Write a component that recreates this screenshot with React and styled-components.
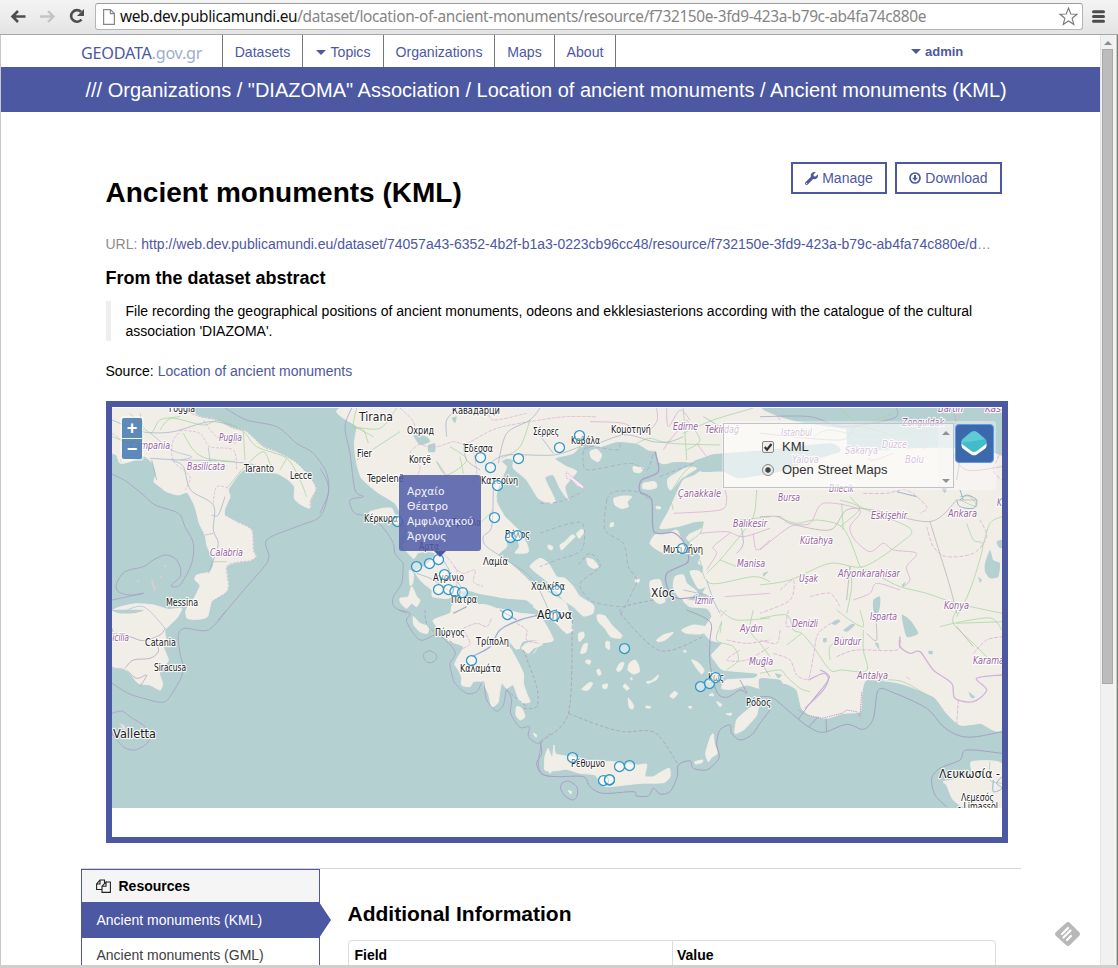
import React from "react";
import styled, { createGlobalStyle, css } from "styled-components";
import { FaWrench } from "react-icons/fa";

const blue = "#4c58a2";
const sans = '"Liberation Sans", Arial, sans-serif';

const Global = createGlobalStyle`
  * { box-sizing: border-box; }
  html, body { margin: 0; height: 968px; overflow: hidden; background: #fff; }
  body { font: 14px/20px ${sans}; color: #000; }
`;

const Browser = styled.div`
  width: 1118px; height: 968px; display: flex; flex-direction: column; overflow: hidden;
`;
const Toolbar = styled.div`
  height: 35px; flex: none; display: flex; align-items: flex-start; padding: 3px 11px 0 8px;
  background: linear-gradient(#f4f4f4, #e4e4e4); border-bottom: 1px solid #a6a6a6;
`;
const NavIcon = styled.svg`
  flex: none; width: 20px; height: 20px; margin: 3px ${p => p.$gap}px 0 0;
`;
const UrlBar = styled.div`
  width: 988px; flex: none; height: 27px; display: flex; align-items: center; padding: 0 4px 0 7px;
  background: #fff; border: 1px solid #b5b5b5; border-top-color: #9b9b9b; border-radius: 3px; margin-right: 9px;
`;
const UrlText = styled.span`
  flex: 1; margin-left: 5px; white-space: nowrap; font: 15.4px/20px "Noto Sans", sans-serif;
  letter-spacing: -0.345px; color: #858585;
  b { font-weight: 400; color: #111; }
`;
const Viewport = styled.div`
  flex: 1; display: flex; min-height: 0; border-left: 1px solid #c9c9c9;
`;
const Page = styled.main`
  width: 1099px; flex: none; overflow: hidden; background: #fff;
`;
const ScrollBar = styled.div`
  width: 14px; flex: none; background: #f1f1f1; display: flex; flex-direction: column; align-items: center;
  border-left: 1px solid #e4e4e4;
`;
const ScrollArrow = styled.i`
  width: 0; height: 0; margin: 6px 0 4px; border: 4px solid transparent; border-top-width: 0; border-bottom-color: #8c8c8c;
`;
const Thumb = styled.div`
  width: 11px; height: 635px; background: #bcbcbc; border: 1px solid #a9a9a9;
`;
const Edge = styled.div`
  width: 4px; background: linear-gradient(90deg, #f4f4f4 50%, #c8c8c8 50% 75%, #75857a 75%);
`;
const BottomEdge = styled.div`
  height: 3px; flex: none; background: #d0cfcd;
`;

const NavBar = styled.nav`
  height: 32px; display: flex; padding-left: 80px; color: ${blue};
`;
const Brand = styled.div`
  width: 141px; padding-top: 8px; white-space: nowrap; font: 16.2px/20px "Noto Sans", sans-serif; letter-spacing: -0.25px;
  span { color: #9eaed0; }
`;
const NavItem = styled.div`
  width: ${p => p.$w}px; border-left: 1px solid #777; display: flex; align-items: center; justify-content: center;
  padding-top: 2px; gap: 5px; font-size: 14.1px;
`;
const Caret = styled.i`
  border: 5px solid transparent; border-top-color: ${blue}; border-bottom: 0;
`;
const UserMenu = styled.div`
  margin-left: 295px; display: flex; align-items: center; gap: 4px; font-weight: 700; font-size: 13px; padding-top: 1px;
`;
const NavEnd = styled.div`border-left: 1px solid #777;`;
const Banner = styled.div`
  height: 45px; padding: 0 0 0 84.5px; background: ${blue}; color: #fff; font-size: 20px; line-height: 46px; white-space: nowrap;
`;
const Content = styled.section`
  padding: 50px 0 0 105px; width: 1007px;
`;
const TitleRow = styled.div`
  display: flex; justify-content: space-between; height: 71px; padding-right: 6px;
`;
const Title = styled.h1`
  margin: 15px 0 0 -0.5px; font: 700 28px/32px ${sans}; white-space: nowrap;
`;
const Actions = styled.div`display: flex; gap: 8px;`;
const Button = styled.button`
  width: ${p => p.$w}px; height: 32px; padding: 0; border: 2px solid ${blue}; background: #fff; color: ${blue};
  display: flex; align-items: center; justify-content: center; gap: 4px; font: 14px/20px ${sans};
`;
const UrlLine = styled.p`
  margin: 0 0 0 -0.5px; color: #8b8b8b; white-space: nowrap; line-height: 22px;
  a { color: ${blue}; }
`;
const Heading = styled.h3`
  margin: ${p => p.$top}px 0 0 -0.5px; font: 700 ${p => p.$size}px/24px ${sans}; white-space: nowrap;
`;
const Quote = styled.blockquote`
  margin: 11px 0 0; height: 40px; padding-left: 14.5px; border-left: 5px solid #eee; white-space: nowrap;
`;
const Source = styled.p`
  margin: 20px 0 20px -0.5px; a { color: ${blue}; }
`;
const MapFrame = styled.div`
  position: relative; width: 902px; height: 442px; border: 6px solid ${blue}; padding-top: 1px; background: #fff;
`;
const MapSvg = styled.svg`display: block; width: 890px; height: 400px;`;
const ZoomControls = styled.div`
  position: absolute; left: 8px; top: 9px; padding: 2px; display: grid; gap: 1px; background: rgba(255,255,255,.4); border-radius: 3px;
`;
const ZoomButton = styled.div`
  width: 20px; height: 20px; background: rgba(66,119,174,.85); color: #fff; font: 700 18px/20px ${sans}; text-align: center;
  border-radius: ${p => (p.$bottom ? "0 0 2px 2px" : "2px 2px 0 0")};
`;
const Popup = styled.div`
  position: absolute; left: 287px; top: 68px; width: 82px; height: 76px; padding: 9px 8px; border-radius: 3px;
  background: rgba(82,92,168,.86); color: #f4f4ff; font: 10.7px/15px "DejaVu Sans", sans-serif;
  &::after { content: ""; position: absolute; left: 35px; top: 76px; border: 6px solid transparent; border-top-color: ${blue}; border-bottom: 0; }
`;
const LayerArea = styled.div`
  position: absolute; left: 610px; top: 14px; width: 274px; height: 69px; padding: 2px 0 0 1px; background: rgba(255,255,255,.35);
  display: flex; align-items: flex-start; gap: 1px; border-radius: 3px;
`;
const LayerPanel = styled.div`
  width: 231px; height: 65px; border: 1px solid #c2c2ca; background: rgba(255,255,255,.42); display: flex; justify-content: space-between;
`;
const LayerList = styled.div`padding: 11px 0 0 38px;`;
const LayerRow = styled.label`
  display: flex; align-items: center; height: 23px; gap: 8px; font-size: 13px; color: #333; white-space: nowrap;
`;
const Check = styled.svg`width: 12px; height: 12px;`;
const MiniScroll = styled.div`
  width: 15px; display: flex; flex-direction: column; justify-content: space-between; align-items: center; padding: 7px 0 4px; background: rgba(245,245,245,.4);
  i { border: 4px solid transparent; border-top: 0; border-bottom-color: #929292; }
  i + i { transform: rotate(180deg); }
`;
const LayerButton = styled.svg`
  width: 39px; height: 39px; margin-top: 1px; background: #3c68ac; border: 1px solid #5b9cf0; border-radius: 4px;
`;

const Lower = styled.section`
  margin: 25px 0 0 80px; width: 940px; display: flex; align-items: flex-start; border-top: 1px solid #d6d6d6;
`;
const Sidebar = styled.aside`width: 239px; border: 1px solid ${blue}; border-bottom: 0;`;
const SideHead = styled.div`
  height: 32px; display: flex; align-items: center; gap: 7.5px; padding-left: 14px; background: #f5f5f5; font-weight: 700;
`;
const SideItem = styled.div`
  position: relative; height: 35px; padding-left: 14.5px; line-height: 34px; border-top: 1px solid ${blue}; color: #404040;
  ${p => p.$active && css`
    background: ${blue}; color: #fff;
    &::after { content: ""; position: absolute; left: 237px; top: -1px; border: solid transparent; border-width: 18px 0 18px 12px; border-left-color: ${blue}; }
  `}
`;
const Info = styled.div`padding: 33px 0 0 28px;`;
const Table = styled.div`
  margin-top: 14px; width: 648px; height: 60px; display: grid; grid-template-columns: 323px 1fr;
  border: 1px solid #ddd; border-radius: 4px; font-weight: 700; line-height: 29px;
`;
const Cell = styled.div`padding-left: 5.5px; & + & { border-left: 1px solid #ddd; padding-left: 4px; }`;
const FeedBadge = styled.svg`position: absolute; left: 1054px; top: 921px; width: 27px; height: 27px;`;

/* Turns a point list into a softly rounded path. */
const curve = (list, closed) => {
  const p = list.trim().split(/\s+/).map(s => s.split(",").map(Number));
  const n = p.length;
  const at = i => (closed ? p[(i + n) % n] : p[Math.max(0, Math.min(n - 1, i))]);
  const k = closed ? 0.1 : 0.15;
  let d = `M${p[0]}`;
  for (let i = 0; i < (closed ? n : n - 1); i++) {
    const [a, b, c, e] = [at(i - 1), at(i), at(i + 1), at(i + 2)];
    d += `C${b[0] + (c[0] - a[0]) * k},${b[1] + (c[1] - a[1]) * k} ${c[0] - (e[0] - b[0]) * k},${c[1] - (e[1] - b[1]) * k} ${c}`;
  }
  return closed ? d + "Z" : d;
};

/* Map artwork: each sheet is drawn at three times its size on the page. */
const Sheet = ({ x, y, children }) => <g transform={`translate(${x} ${y}) scale(.33333)`}>{children}</g>;
const Land = ({ d }) => d.split("|").map((p, i) => <path key={i} d={curve(p, true)} fill="#f1eee8" stroke="#f1eee8" strokeWidth="3" strokeLinejoin="round" />);
const Sea = ({ d }) => d.split("|").map((p, i) => <path key={i} d={curve(p, true)} fill="#b5d0d0" />);
const Lines = ({ d, c, w = 2.5, dash, o = 0.9 }) => (
  <g fill="none" stroke={c} strokeWidth={w} strokeDasharray={dash} opacity={o} strokeLinejoin="round">
    {d.split("|").map((p, i) => <path key={i} d={curve(p)} />)}
  </g>
);
const GREEN = "#a5d6a0", ROAD = "#a5b3c9", GREY = "#b5b5b0", PINK = "#dfb6d8", BORDER = "#a69bc4";

const islandsB = "190,325 215,325 225,345 240,350 245,365 225,370 200,350 150,345 150,335|275,560 290,590 300,600 290,620 275,610 260,625 243,610 240,595 265,590|268,512 280,520 278,550 270,555";
const islandsC = "150,155 170,148 185,165 175,185 155,175|280,200 310,205 300,218 282,215|310,250 345,245 350,262 330,268 308,265|222,295 250,288 275,290 262,305 265,320 245,325 225,315|212,370 220,368 220,378 210,380|348,320 360,320 362,326 350,326|330,430 345,405 385,400 410,390 425,420 440,440 420,455 375,460 345,445|405,530 430,525 440,550 470,575 440,600 415,590 400,560|330,545 360,540 370,580 375,605 355,610 335,590|450,515 480,515 500,555 475,565|140,475 160,480 175,500 160,505 145,495|25,435 38,440 35,450 25,445|60,435 75,425 95,405 105,410 80,435 65,450|110,400 125,388 132,395 118,415|285,540 298,538 297,546 288,548";
const evia = "0,475 25,490 50,530 75,535 100,560 120,590 160,615 158,640 130,648 100,620 70,600 45,565 10,535 -30,500";
const islandsG = "172,15 195,18 215,45 245,75 240,85 212,80 195,55 175,35|115,72 130,66 132,80 118,95|130,105 142,100 138,125 122,130|198,95 208,96 208,118 198,112|268,160 285,150 295,165 298,185 280,192 264,180|240,160 252,158 245,178 235,185 230,178|140,150 152,152 148,163 137,157|170,182 178,178 183,192 176,196|350,90 370,75 400,68 375,90 355,95|425,60 460,45 495,50 510,60 480,72 440,70|320,215 335,212 355,195 350,208 325,220|125,238 148,218 158,220 145,240|188,225 202,222 200,235 190,235|255,222 268,235 260,240 250,230|265,265 280,285 278,297 268,292|390,258 402,245 413,250 400,265|455,150 475,158 492,180 485,192 470,175|318,288 332,290 330,294 318,293|507,255 518,250 520,258|530,275 545,283 540,290|270,205 276,204 276,210|445,290 455,290 452,296|558,312 575,310 572,316|430,122 438,122 436,128|512,380 520,372 523,400 532,430 515,442 505,455 497,430|465,455 488,450 485,458 467,462|585,370 590,330 610,310 635,290 655,285 650,315 630,340 610,360|85,542 95,545 92,552|60,50 75,48 70,62";
const crete = "15,440 25,415 28,440 38,438 42,405 48,432 105,442 140,452 220,455 290,465 320,463 315,498 340,500 365,485 388,475 390,500 370,518 300,520 210,530 185,525 165,495 120,490 80,478 50,482 15,480";

const GreekMap = () => (
  <MapSvg viewBox="112 408 890 400">
    <rect x="112" y="408" width="890" height="400" fill="#b5d0d0" />
    <Sheet x={100} y={400}>
      <Land d="30,20 240,20 300,50 350,60 400,85 440,95 490,140 530,155 585,185 625,225 648,265 632,300 630,325 600,312 583,295 583,260 565,240 530,220 470,215 435,208 415,225 400,245 385,270 390,290 375,325 375,345 410,365 455,390 460,450 468,470 450,482 410,487 380,500 385,555 378,577 335,605 322,650 290,658 262,655 258,630 285,590 300,556 285,540 290,525 330,515 342,485 322,440 315,405 298,370 285,320 262,278 235,285 200,275 180,260 162,245 168,220 158,190 130,168 90,185 60,190 50,165 30,150|30,640 100,612 160,615 205,628 245,625 230,655 195,690 198,715 190,740 205,780 190,800 178,820 188,850 180,870 150,855 115,850 90,820 70,805 30,790" />
      <Lines d="36,60 110,90 150,98 220,95 330,65 410,80|150,175 240,180 340,182 440,190 500,205|155,180 170,240|215,180 250,200 272,270 340,315 340,390 355,430 340,480 325,520|375,290 355,345 335,345" c={ROAD} />
      <Lines d="90,40 150,98 180,60 240,50|180,90 215,55 310,75 360,60 430,95 470,140 560,175 600,240 620,290|250,100 280,150 320,175 405,185|385,260 430,205 490,155 515,210|335,485 380,485|430,95 435,180|560,175 540,210|120,40 130,90 120,150|36,110 90,130" c={GREEN} />
      <Lines d="245,90 220,120 215,160 225,190 270,230 255,270|240,90 300,100 330,140 400,150 410,210|340,310 350,260 390,265|36,100 70,130 60,190|310,60 350,110 410,130" c={PINK} dash="9 4" />
      <Lines d="150,98 215,150 275,170 240,180|325,140 330,185|315,405 340,400|200,690 130,620 60,640" c={ROAD} w={2} />
      <Lines d="36,222 80,245 130,285 165,315 235,340 255,380 280,430 275,490 240,555 213,557 240,530 240,500 225,475 195,465 160,480 130,500 75,515 50,550 55,575 90,585 130,580 36,600|375,24 440,60 530,80 590,130 640,160 680,220 685,280 660,350 590,380 500,420 505,480 440,560 355,660" c={BORDER} />
      <Lines d="155,540 165,572|192,500 200,497|180,532 186,530|110,543 117,543" c="#dfcbd5" w={6} />
      <Lines d="240,24 300,50 350,60 400,85 440,95 490,140 530,155 585,185 625,225 648,265 632,300 630,325" c="#a9a9bd" w={2} dash="7 3" />
      <Lines d="375,345 410,365 455,390 460,450 468,470 450,482 410,487 380,500 385,555 378,577 335,605" c="#b9a9c5" w={2} dash="7 4" />
    </Sheet>
    <Sheet x={100} y={610}>
      <Lines d="36,55 45,70 90,80 130,92 180,75 195,55|75,175 100,150 150,145 175,125 170,95|80,180 110,205 140,195 120,230" c="#bcaec2" w={3} />
      <Lines d="380,0 325,60 255,55 235,75 240,130 250,185 210,260 185,277 130,265 85,250 36,220|36,310 65,303 90,320 140,355 145,395 105,420 70,410 36,370" c={BORDER} />
      <Sea d="36,0 130,0 100,10 60,10" />
      <polygon points="58,340 72,345 80,360 70,358" fill="#e9dde9" />
    </Sheet>
    <Sheet x={320} y={400}>
      <Land d={"95,20 110,80 103,130 110,190 125,235 170,275 225,310 245,350 262,380 260,420 250,440 280,475 295,458 325,455 345,460 335,480 310,500 285,515 305,545 335,570 338,590 385,595 415,575 450,572 500,588 560,595 620,600 645,625 685,650 720,680 740,700 758,690 750,650 738,610 710,590 670,570 640,555 610,525 570,490 535,465 560,440 560,420 590,415 598,440 585,458 610,460 625,455 620,430 590,385 555,350 530,305 535,260 550,225 560,200 545,185 560,175 580,180 580,205 620,240 655,295 690,310 705,300 675,235 700,225 720,265 745,300 735,260 770,215 740,200 705,175 760,160 790,130 840,140 890,125 950,130 985,150 1010,155 1015,185 1030,185 1115,182 1140,150 1200,120 1200,20|" + islandsB + "|410,600 430,595 440,610 500,615 530,625 570,632 600,640 660,650 700,720 660,730 640,760 600,760 560,720 620,880 600,885 570,840 545,850 530,910 500,850 460,835 440,860 420,820 410,780 430,740 380,720 350,680 340,660 390,640 395,620"} />
      <Sea d="440,577 500,586 560,597 620,606 640,618 600,622 540,614 480,600|280,105 320,110 330,125 300,135|325,135 345,130 345,155 325,155|395,55 410,50 405,70" />
      <Lines d="95,24 75,80 90,160 105,270 130,290 90,300 105,340 155,350 195,390 220,430 225,460 250,490|250,490 245,550 220,590 222,620 260,640|0,205 20,240 25,280 0,340" c={BORDER} />
      <Lines d="240,24 280,65 300,130 350,140 400,125 440,130 530,85 660,60 740,50 830,50|300,130 270,160 300,200 290,230|460,150 470,220 455,250|370,460 410,510 410,560 440,565|400,500 430,520 465,510 460,545 490,560|505,24 520,60 620,40" c={PINK} dash="12 3" />
      <Lines d="110,24 100,80 130,90 145,130|100,80 180,85 230,24|110,180 240,95|105,80 160,110|350,185 380,225 440,180 390,140|420,170 430,220|520,330 480,370|530,290 545,250|545,175 600,140 630,60" c={GREEN} />
      <Lines d="415,24 380,60 380,110|350,185 375,220|430,135 440,180 480,210|510,190 560,165 700,165 780,140 830,120|660,24 630,60 560,100 535,190|520,270 515,380 490,410 500,440 560,480 640,540 690,640|290,520 340,540 410,590|370,480 400,530 430,570|640,80 670,120 700,160" c={ROAD} />
    </Sheet>
    <Sheet x={540} y={400}>
      <Land d={islandsC + "|" + evia + "|360,20 360,185 410,182 455,186 500,168 550,160 900,180 900,30 750,20|385,235 440,203 470,205 425,235 395,270 385,262|700,210 550,215 515,212 485,212 460,228 430,240 408,285 385,335 360,385 420,378 460,366 490,364 485,385 450,402 440,415 462,440 482,470 475,490 490,500 485,530 500,555 490,580 520,590 490,605 430,600 450,620 500,625 515,650 490,690 510,720 545,730 515,765 530,790 550,810 650,820 640,835 560,840 545,865 575,868 620,855 660,865 670,845 700,855 735,850 770,870 785,925 810,945 860,955 910,940 960,935 965,885 980,840 1080,850 1180,890 1220,940 1260,975 1320,970 1400,955 1400,180 700,180"} />
      <Sea d="460,185 500,170 550,160 680,150 870,130 900,155 800,185 720,215 600,235 550,215 485,215|680,20 1150,20 1100,50 970,90 800,70 720,50" />
      <polygon points="78,215 130,258 132,268 112,258 95,240 80,235" fill="#f6e7f0" stroke="#cfa3cc" strokeWidth="2" strokeDasharray="5 3" />
      <Lines d="345,155 355,215 305,240 300,275 335,300 342,395 400,398 430,425 445,465 440,490 380,520 385,570 415,595 480,590" c={BORDER} w={4} />
      <Lines d="200,300 195,390 250,430 265,500 290,540 270,590 240,650|200,300 220,275 290,275 330,300|0,400 90,370 130,375 125,450 50,480 0,500|115,495 150,460 180,500 120,550 150,600 200,615 240,620|240,130 230,150 140,140 130,190 150,210 270,190 320,210 340,160|360,230 460,190|0,310 60,305 130,275" c={BORDER} dash="12 7" o={.75} />
      <Lines d="350,24 350,65 310,100 250,70 150,65|380,24 385,80 420,30 450,60|370,150 390,120 440,60|480,400 560,395 610,410 690,385|400,340 540,330 560,300 555,270|500,510 530,460 520,440 570,400|690,420 650,450 640,400|470,130 500,170|555,590 690,580" c={PINK} w={3} />
      <Lines d="290,130 330,115 390,130 540,135|430,24 440,180|440,60 480,120 440,150|390,280 430,220 475,180|395,310 400,330|490,365 480,400 440,430|480,480 510,550 640,530 690,545|650,270 640,350 590,420 540,480 500,520|690,350 600,360|430,100 520,60 640,24|540,480 590,500" c={GREEN} />
      <Lines d="130,150 250,105 340,125 390,125 430,110|500,540 520,600 540,640|430,570 500,585|600,360 610,430 590,460|540,80 490,50" c={ROAD} />
    </Sheet>
    <Sheet x={760} y={400}>
      <Lines d="50,350 110,370 170,360 250,385 300,500|240,24 300,70 400,40|160,110 210,90 330,110 520,90|270,290 310,325 450,385 420,430 310,500 210,490 90,540 0,555|240,300 300,325 240,380|245,310 250,390|300,500 360,530 420,560 500,580 590,610 726,640|600,300 650,320 630,290 600,290|620,370 640,420 668,440 630,570 590,650|270,500 275,560 260,640|668,440 690,370 726,350" c={GREEN} />
      <Lines d="0,350 60,350 90,370 210,390 260,330 340,330 510,365 590,300|510,365 530,430 570,560 590,640|580,24 600,150 590,240|590,300 650,300|380,100 290,80 240,120 0,100|270,500 260,600" c={GREY} />
      <Lines d="0,450 90,380 150,370 190,310 300,330 270,380 285,420 330,455 370,430 400,450 470,460 440,500 450,540 430,560|600,30 580,150 620,210 726,200|330,120 330,180 400,160|40,24 60,60|280,600 330,580 350,550 420,570" c={PINK} w={3} />
      <Lines d="310,280 380,280 440,270 500,320 480,340|500,380 520,440 560,470 640,460 680,410 660,360|60,570 100,540 90,600 0,640|150,590 210,580 240,620|500,40 490,150|670,24 690,100 720,150 700,210 726,240" c={PINK} w={3} dash="12 5" />
      <Lines d="590,300 600,320 640,325 650,300 620,285 600,300|600,270 610,300|410,275 470,290" c="#91a9cb" w={3} />
      <Sea d="675,490 690,450 700,480 720,490 715,530 690,535 675,515|340,600 360,590 360,620 350,650 340,630|710,425 726,420 726,445 715,440|655,530 665,540 660,548|425,555 438,545 430,560|545,265 560,265 555,280|10,520 25,515 10,530|350,24 370,24 400,35 360,40" />
      <Lines d="0,50 150,50 250,80 400,55 410,24" c={BORDER} />
    </Sheet>
    <Sheet x={320} y={610}>
      <Sea d="660,100 660,90 610,95 600,120 630,140|585,150 575,125 610,120 640,210 625,225 600,180" />
      <Land d="280,20 300,40 325,50 322,70 300,65 282,45|620,100 665,90 665,105 640,115 625,130 605,115|590,290 605,295 615,320 600,330 588,315|640,370 650,375 648,382|675,450 685,420 700,460 690,490|410,150 440,120 560,110 580,130 610,190 610,230 630,275 600,275 580,225 560,235 540,215 535,275 515,290 505,250 485,215 460,215 450,230 425,225 425,195 405,165|665,55 680,50 672,65" />
      <Lines d="235,0 270,10 260,35 300,90 355,75 405,125 390,160 395,190 405,220 440,250 470,245 490,215 500,270 530,303 550,285 560,240 575,270 572,310 600,352 628,350 625,380 650,400 663,400 655,460 665,490 690,500|330,122 347,132 350,145 335,158 320,155 310,140 315,127 330,122" c={BORDER} />
      <Lines d="315,0 325,50 400,100|610,120 650,230 650,290 610,295|560,240 620,290|663,400 690,370" c={BORDER} dash="10 6" />
      <Lines d="430,55 470,40 500,50 515,24|430,60 450,100 420,120|590,40 620,60 620,90 660,100" c={PINK} w={3} dash="12 3" />
      <Lines d="455,140 510,110 540,60 600,30 680,10|540,0 590,30|400,10 440,-10" c="#99a9cc" w={4} />
    </Sheet>
    <Sheet x={540} y={610}>
      <Land d={islandsG + "|" + crete} />
      <Lines d="340,-30 250,-10 240,10|240,10 360,122 490,80|97,30 85,310 0,395|85,310 175,345 250,365 345,368 412,460" c={BORDER} dash="11 6" />
      <Lines d="440,0 510,35 510,90 510,160 530,245 560,262 600,240 620,250 600,210|0,395 5,430 -10,460 5,492 50,500 130,500 150,530 190,550 280,545 290,558 325,558 340,535 360,552 390,545 412,500 415,465 450,452 460,475 500,480 525,460 538,440 530,400 540,360 570,345 575,370 600,390 635,375 660,340 690,300|65,520 85,513 110,530 112,555 100,570 75,558 62,535 65,520" c={BORDER} w={3} />
      <Lines d="545,35 530,90 580,110 595,150 560,180|540,0 590,30 690,24|640,0 630,60 660,100 690,140|545,35 540,70" c={GREEN} />
      <Lines d="560,90 620,100 690,90|600,120 560,150 620,150 690,110|540,20 560,0" c={PINK} w={3} dash="12 4" />
    </Sheet>
    <Sheet x={760} y={610}>
      <Land d="635,455 726,462 726,600 630,600 580,570 560,525 550,515 600,505 635,490" />
      <Sea d="425,15 450,30 475,70 440,80|190,85 200,85 200,95 190,97|215,40 235,28 240,35 225,45|250,60 275,42 285,45 262,65|345,100 355,100 358,120|505,123 518,123 518,132 507,132|625,245 645,260 635,265|0,205 60,210 70,230 40,240 0,240|45,190 65,195 55,205" />
      <Lines d="0,260 40,265 100,315 145,350 190,367 260,343 310,358 340,325 355,240 400,248 500,295 550,350 600,378 650,380 726,365|115,328 150,280 205,210 200,190 180,180|145,352 175,320|200,365 198,325|726,430 620,420 600,450 540,475 515,505 525,555 560,590" c={BORDER} w={3} />
      <Lines d="0,25 80,15 100,60 125,70 160,110 210,180 245,180 320,182 310,120 310,60|300,0 310,50 270,30 230,0|210,150 210,110 250,80|590,0 580,40 640,100 690,150|580,40 540,50|590,40 726,35|580,40 690,24 726,60|0,190 60,180 80,200 120,235 150,245|320,210 400,210 440,220 500,255|690,455 690,510 726,520|125,70 80,105" c={GREEN} />
      <Lines d="85,0 80,50 130,30|40,130 90,150 110,195 145,205 160,140 175,70 230,30|230,140 290,120 410,120 420,80|590,345 595,270|640,130 680,90 726,80|440,200 450,210|0,90 50,100 60,60" c={PINK} w={3} dash="12 4" />
      <Lines d="420,80 420,110 450,130 480,125 520,180 575,220 585,265 640,275 680,240 650,205 726,195|145,210 190,190 205,205 190,240 135,295" c="#d0addb" w={4} />
      <Lines d="320,70 350,90 345,0|0,150 30,200|590,50 640,110" c={GREY} />
      <Lines d="700,510 700,545 726,535 710,520 726,500" c="#91a9cb" w={3} />
      <polyline points="115,300 140,315 185,325 245,310 260,300 290,305 300,320 305,245" fill="none" stroke="#bd9cc5" strokeWidth="3" strokeDasharray="4 3" />
    </Sheet>
    <Labels />
    {MARKERS.map(([x, y], i) => <circle key={i} cx={x} cy={y} r="5" fill="rgba(255,255,255,.45)" stroke="#3097c9" strokeWidth="1.25" />)}
  </MapSvg>
);

const MARKERS = [[480.5,457.5],[490.5,467.5],[518.5,458.5],[497.5,485.5],[494.5,517.5],[510.5,537.5],[517.5,535.5],[397.5,521.5],[416.5,566.5],[429.5,563.5],[438.5,559.5],[444.5,574.5],[438.5,589.5],[448.5,589.5],[455,591.5],[462.5,592.5],[507.5,614.5],[471.5,660.5],[559.5,447.5],[579.5,435.5],[682.5,548.5],[556.5,590.5],[554.5,615.5],[624.5,648.5],[700.5,686.5],[709.5,683.5],[715.5,677.5],[572.5,757.5],[619.5,766.5],[629.5,765.5],[603.5,780.5],[609.5,780],[609.5,779.5]];

/* text, left edge, baseline, width, size, region flag */
const LABELS = [
  ["Foggia",169,412,26,9],["Taranto",244,472,30,9],["Lecce",290,479,22,9],["Messina",166,606,32,9],["Catania",145,646,31,9],["Siracusa",154,671,32,9],["Valletta",113,738,43,12],
  ["Tirana",359,421,34,12],["Fier",357,457,15,9],["Korçë",409,463,22,9],["Tepelenë",367,482,37,9],["Охрид",407,434,27,9],["Кавадарци",452,414,48,9],["Έδεσσα",463,452,30,9],["Σέρρες",533,435,26,9],["Καβάλα",571,444,29,9],["Κομοτηνή",611,433,40,9],["Κατερίνη",481,484,37,9],["Κέρκυρα",364,522,34,9],["Τρίκαλα",452,526,29,9],["Βόλος",505,538,25,9],["Άρτα",419,550,20,9],["Λαμία",483,565,25,9],["Αγρίνιο",433,581,31,9],["Πάτρα",451,603,26,9],["Χαλκίδα",531,590,34,9],["Αθήνα",537,619,35,12],["Πύργος",435,636,30,9],["Τρίπολη",476,645,33,9],["Καλαμάτα",460,672,41,9],["Χίος",651,597,24,12],["Μυτιλήνη",663,553,40,9],["Κως",708,681,16,9],["Ρόδος",746,706,25,9],["Ρέθυμνο",571,767,34,9],["Λευκωσία -",939,778,61,12],["Λεμεσός",961,801,33,9],["- Limassol",958,810,40,9],
  ["Campania",130,449,40,9,1],["Puglia",219,441,23,9,1],["Basilicata",187,470,38,9,1],["Calabria",210,556,33,9,1],["Sicilia",108,641,21,9,1],["Edirne",673,430,25,9,1],["Tekirdağ",705,433,34,9,1],["Istanbul",781,436,31,9,1],["Zonguldak",902,426,42,9,1],["Bartın",938,412,25,9,1],["Kasta",985,412,25,9,1],["Düzce",882,448,25,9,1],["Sakarya",845,454,33,9,1],["Yalova",792,463,27,9,1],["Bolu",905,463,19,9,1],["Bilecik",829,492,25,9,1],["Çanakkale",678,497,43,9,1],["Bursa",778,501,22,9,1],["Balıkesir",733,527,34,9,1],["Eskişehir",871,519,36,9,1],["Ankara",948,517,29,9,1],["Kırıkkale",997,506,32,9,1],["Kütahya",800,544,33,9,1],["Manisa",737,567,28,9,1],["Uşak",799,582,19,9,1],["Afyonkarahisar",838,577,62,9,1],["İzmir",695,604,19,9,1],["Aydın",740,632,23,9,1],["Denizli",792,627,26,9,1],["Burdur",834,645,27,9,1],["Isparta",870,620,27,9,1],["Konya",944,609,25,9,1],["Karaman",973,664,36,9,1],["Antalya",857,679,31,9,1],["Muğla",749,665,24,9,1]
];
const MapLabel = styled.text`
  font-family: "DejaVu Sans", sans-serif; font-size: ${p => p.$size}px; font-style: ${p => (p.$region ? "italic" : "normal")};
  fill: ${p => (p.$region ? "#965fa0" : "#222")}; stroke: rgba(255,255,255,.85); stroke-width: 2.4px; paint-order: stroke; stroke-linejoin: round;
`;
const Labels = () => LABELS.map(([t, x, y, w, s, r]) => (
  <MapLabel key={t} x={x} y={y} textLength={w} lengthAdjust="spacingAndGlyphs" $size={s + 0.6} $region={r}>{t}</MapLabel>
));

export default function App() {
  return (
    <>
      <Global />
      <Browser>
        <Toolbar>
          <NavIcon $gap={10} viewBox="0 0 20 20"><path d="M17.500 10.500H5M10 5L4.500 10.500 10 16" fill="none" stroke="#4e4e4e" strokeWidth="2.600" /></NavIcon>
          <NavIcon $gap={9} viewBox="0 0 20 20"><path d="M2 10.500H15M10 5L15.500 10.500 10 16" fill="none" stroke="#c4c4c4" strokeWidth="2.400" /></NavIcon>
          <NavIcon $gap={8} viewBox="0 0 20 20"><path d="M14.500 13.500A5.800 5.800 0 1 1 14 5.800" fill="none" stroke="#4e4e4e" strokeWidth="2.600" /><path d="M17 3v7h-7z" fill="#4e4e4e" /></NavIcon>
          <UrlBar>
            <svg width="12" height="16" viewBox="0 0 12 16"><path d="M.6.6h6.800l4 4v10.800H.6zM7.400.6v4h4" fill="#fff" stroke="#888" strokeWidth="1.200" /></svg>
            <UrlText><b>web.dev.publicamundi.eu</b>/dataset/location-of-ancient-monuments/resource/f732150e-3fd9-423a-b79c-ab4fa74c880e</UrlText>
            <svg width="19" height="19" viewBox="0 0 19 19"><path d="M9.500 1l2.300 6 6.200.3-4.900 4 1.700 6.200-5.300-3.500-5.300 3.500 1.700-6.200L1 7.300 7.200 7z" fill="#fff" stroke="#777" strokeWidth="1.100" /></svg>
          </UrlBar>
          <svg width="13" height="26" viewBox="0 0 13 26"><path d="M1.500 8.700h10M1.500 13.500h10M1.500 18.300h10" stroke="#4c4c4c" strokeWidth="3" strokeLinecap="round" /></svg>
        </Toolbar>
        <Viewport>
          <Page>
            <NavBar>
              <Brand>GEODATA<span>.gov.gr</span></Brand>
              <NavItem $w={80}>Datasets</NavItem>
              <NavItem $w={81}><Caret />Topics</NavItem>
              <NavItem $w={111}>Organizations</NavItem>
              <NavItem $w={60}>Maps</NavItem>
              <NavItem $w={61}>About</NavItem>
              <NavEnd />
              <UserMenu><Caret />admin</UserMenu>
            </NavBar>
            <Banner>/// Organizations / "DIAZOMA" Association / Location of ancient monuments / Ancient monuments (KML)</Banner>
            <Content>
              <TitleRow>
                <Title>Ancient monuments (KML)</Title>
                <Actions>
                  <Button $w={96}><FaWrench size={13} />Manage</Button>
                  <Button $w={107}>
                    <svg width="12" height="12" viewBox="0 0 12 12"><circle cx="6" cy="6" r="5" fill="none" stroke={blue} strokeWidth="1.700" /><path d="M5 2.900h2v2.900h1.900L6 9 3.100 5.800H5z" fill={blue} /></svg>
                    Download
                  </Button>
                </Actions>
              </TitleRow>
              <UrlLine>URL: <a>http://web.dev.publicamundi.eu/dataset/74057a43-6352-4b2f-b1a3-0223cb96cc48/resource/f732150e-3fd9-423a-b79c-ab4fa74c880e/d</a>…</UrlLine>
              <Heading $top={11} $size={18}>From the dataset abstract</Heading>
              <Quote>File recording the geographical positions of ancient monuments, odeons and ekklesiasterions according with the catalogue of the cultural<br />association 'DIAZOMA'.</Quote>
              <Source>Source: <a>Location of ancient monuments</a></Source>
              <MapFrame>
                <GreekMap />
                <ZoomControls><ZoomButton>+</ZoomButton><ZoomButton $bottom>−</ZoomButton></ZoomControls>
                <Popup>Αρχαίο<br />Θέατρο<br />Αμφιλοχικού<br />Άργους</Popup>
                <LayerArea>
                  <LayerPanel>
                    <LayerList>
                      <LayerRow><Check viewBox="0 0 12 12"><rect x=".5" y=".5" width="11" height="11" rx="1.500" fill="#eee" stroke="#888" /><path d="M2.800 6l2.200 2.700L9.500 3" fill="none" stroke="#333" strokeWidth="2.200" /></Check>KML</LayerRow>
                      <LayerRow><Check viewBox="0 0 12 12"><circle cx="6" cy="6" r="5.500" fill="#e9e9e9" stroke="#888" /><circle cx="6" cy="6" r="2.700" fill="#444" /></Check>Open Street Maps</LayerRow>
                    </LayerList>
                    <MiniScroll><i /><i /></MiniScroll>
                  </LayerPanel>
                  <LayerButton viewBox="0 0 39 39">
                    <path d="M6 19q-1 4 1.500 6l8.500 6q3 2 6 0l8.500-6q2.500-2 1.500-6z" fill="#fff" />
                    <path d="M16 7.500q3-2 6 0l9 7.500q3 3 0 5.500l-9 7q-3 2-6 0l-9-7q-3-2.500 0-5.500z" fill="#42bccb" />
                    <path d="M16 7.500q3-2 6 0l9 7.500-25.500 4q0-2.500 1.500-4z" fill="#5fcbd4" />
                  </LayerButton>
                </LayerArea>
              </MapFrame>
            </Content>
            <Lower>
              <Sidebar>
                <SideHead>
                  <svg width="15" height="14" viewBox="0 0 15 14"><path d="M5.500 10.500H.6V5L4 1h4.500v3M4 1v4H.6M10 3h4.400v10.400H6V7.200L10 3v4.200H6" fill="none" stroke="#222" strokeWidth="1.100" /></svg>
                  Resources
                </SideHead>
                <SideItem $active>Ancient monuments (KML)</SideItem>
                <SideItem>Ancient monuments (GML)</SideItem>
              </Sidebar>
              <Info>
                <Heading $top={0} $size={21}>Additional Information</Heading>
                <Table><Cell>Field</Cell><Cell>Value</Cell></Table>
              </Info>
            </Lower>
          </Page>
          <ScrollBar><ScrollArrow /><Thumb /></ScrollBar>
          <Edge />
        </Viewport>
        <BottomEdge />
        <FeedBadge viewBox="0 0 27 27">
          <path d="M12 2q2-2 4 0l9 9q2 2 0 4l-9 9q-2 2-4 0l-10-9q-2-2 0-4z" fill="#b8b8b8" />
          <path d="M8 13l6-6M9.500 16.500l7-7M13 19l4-4" stroke="#fff" strokeWidth="2.200" strokeLinecap="round" />
        </FeedBadge>
      </Browser>
    </>
  );
}
